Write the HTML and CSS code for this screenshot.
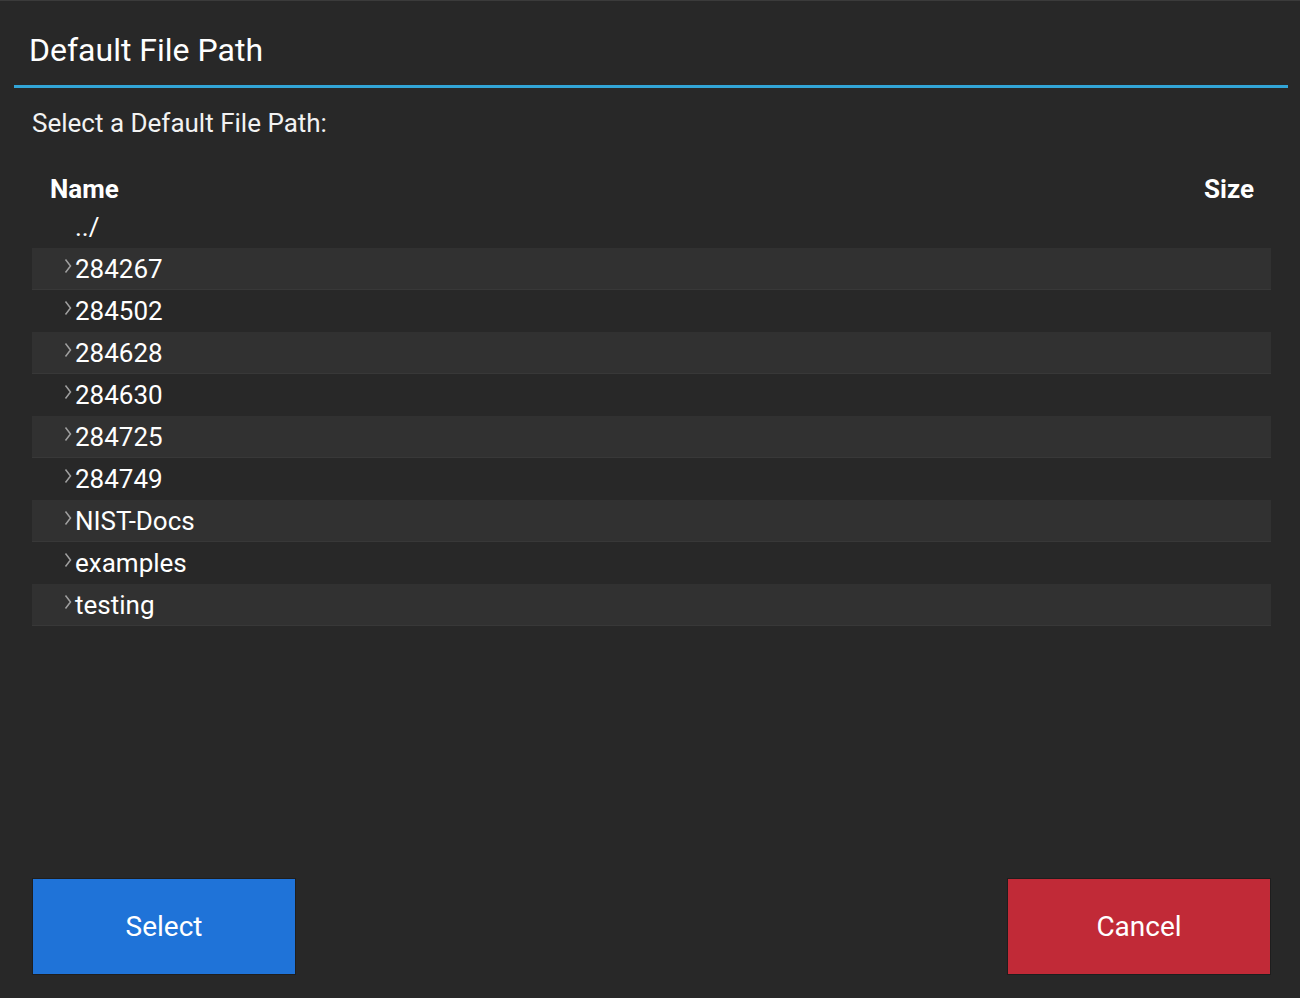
FILE: index.html
```html
<!DOCTYPE html>
<html>
<head>
<meta charset="utf-8">
<link rel="stylesheet" href="styles.css">
</head>
<body>
<div class="dialog">
  <div class="header"><span class="title">Default File Path</span></div>
  <div class="rule"></div>
  <div class="subtitle">Select a Default File Path:</div>
  <div class="table">
    <div class="thead">
      <span class="th-name">Name</span>
      <span class="th-size">Size</span>
    </div>
    <div class="row up"><span class="lead"></span><span class="name">../</span></div>
    <div class="row alt"><span class="lead"><svg class="chev" viewBox="0 0 8 16" width="8" height="16"><path d="M1.5 1.5 L6.5 8 L1.5 14.5"/></svg></span><span class="name">284267</span></div>
    <div class="row"><span class="lead"><svg class="chev" viewBox="0 0 8 16" width="8" height="16"><path d="M1.5 1.5 L6.5 8 L1.5 14.5"/></svg></span><span class="name">284502</span></div>
    <div class="row alt"><span class="lead"><svg class="chev" viewBox="0 0 8 16" width="8" height="16"><path d="M1.5 1.5 L6.5 8 L1.5 14.5"/></svg></span><span class="name">284628</span></div>
    <div class="row"><span class="lead"><svg class="chev" viewBox="0 0 8 16" width="8" height="16"><path d="M1.5 1.5 L6.5 8 L1.5 14.5"/></svg></span><span class="name">284630</span></div>
    <div class="row alt"><span class="lead"><svg class="chev" viewBox="0 0 8 16" width="8" height="16"><path d="M1.5 1.5 L6.5 8 L1.5 14.5"/></svg></span><span class="name">284725</span></div>
    <div class="row"><span class="lead"><svg class="chev" viewBox="0 0 8 16" width="8" height="16"><path d="M1.5 1.5 L6.5 8 L1.5 14.5"/></svg></span><span class="name">284749</span></div>
    <div class="row alt"><span class="lead"><svg class="chev" viewBox="0 0 8 16" width="8" height="16"><path d="M1.5 1.5 L6.5 8 L1.5 14.5"/></svg></span><span class="name">NIST-Docs</span></div>
    <div class="row"><span class="lead"><svg class="chev" viewBox="0 0 8 16" width="8" height="16"><path d="M1.5 1.5 L6.5 8 L1.5 14.5"/></svg></span><span class="name">examples</span></div>
    <div class="row alt"><span class="lead"><svg class="chev" viewBox="0 0 8 16" width="8" height="16"><path d="M1.5 1.5 L6.5 8 L1.5 14.5"/></svg></span><span class="name">testing</span></div>
  </div>
  <div class="footer">
    <button class="btn btn-select">Select</button>
    <button class="btn btn-cancel">Cancel</button>
  </div>
</div>
</body>
</html>
```

FILE: styles.css
```css
html, body {
  margin: 0;
  padding: 0;
  background: #282828;
}
body {
  font-family: Roboto, "Liberation Sans", sans-serif;
  color: #ffffff;
}
.dialog {
  box-sizing: border-box;
  height: 998px;
  border-top: 1px solid #3b3b3b;
  display: flex;
  flex-direction: column;
}
.header {
  padding: 31px 0 17px 29px;
  height: 36px;
}
.title {
  font-size: 32px;
  line-height: 36px;
  display: block;
}
.rule {
  height: 3px;
  background: #32a5d7;
  margin: 0 12px 0 14px;
}
.subtitle {
  margin: 19px 0 0 32px;
  font-size: 26px;
  line-height: 32px;
  color: #f2f2f2;
}
.table {
  margin: 33px 29px 0 32px;
}
.thead {
  display: flex;
  justify-content: space-between;
  height: 34px;
  line-height: 34px;
  font-size: 26px;
  font-weight: 700;
  padding: 0 17px 0 18px;
}
.row {
  box-sizing: border-box;
  height: 42px;
  display: flex;
  align-items: center;
  font-size: 26px;
  border-bottom: 1px solid transparent;
}
.row.alt {
  background: #313131;
  border-bottom-color: #383838;
}
.lead {
  width: 43px;
  flex: none;
  display: flex;
  justify-content: flex-end;
  padding-right: 3px;
  box-sizing: border-box;
  align-self: flex-start;
  padding-top: 10px;
}
.chev {
  fill: none;
  stroke: #a0a0a0;
  stroke-width: 1.5;
}
.name {
  line-height: 32px;
  color: #ffffff;
}
.footer {
  margin-top: auto;
  display: flex;
  justify-content: space-between;
  padding: 0 29px 23px 32px;
}
.btn {
  width: 264px;
  height: 97px;
  border: 1px solid #1e1e1e;
  color: #ffffff;
  font-family: Roboto, "Liberation Sans", sans-serif;
  font-size: 28px;
  cursor: pointer;
}
.btn-select {
  background: #1f73d8;
}
.btn-cancel {
  background: #c12a37;
}
```
